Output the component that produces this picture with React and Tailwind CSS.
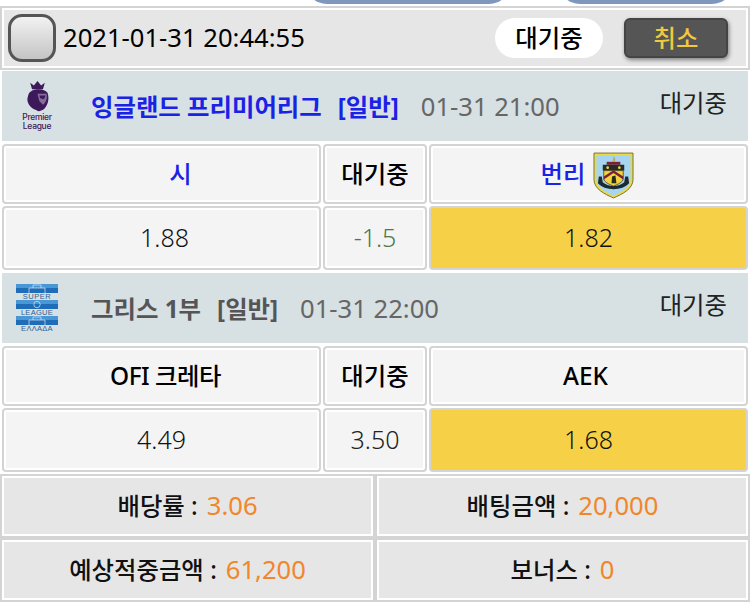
const FONT = "font-['Noto_Sans','Noto_Sans_CJK_KR',sans-serif]"

const PremierLogo = () => (
  <div className="flex flex-col items-center w-[34px] -mt-[1px]">
    <svg viewBox="0 0 26 34" className="w-[25px] h-[31px]">
      <path d="M7 9 L5 2 L9 5 L13 0 L17 5 L21 2 L19 9 Z" fill="#3d195b" />
      <path d="M3 15 C5 8 20 7 24 13 C26 19 25 25 21 30 C18 33 14 34 12 32 C7 31 1 25 2 19 Z" fill="#3d195b" />
      <path d="M13 14 L23 14 C24 19 22 24 19 26 L15 22 Z" fill="#f2eef5" opacity="0.4" />
      <path d="M15 16 L22 16 L20 20 L16 19 Z" fill="#3d195b" />
    </svg>
    <div className="mt-[1px] text-center text-[#3d195b] text-[8.5px] leading-[9px] font-medium font-['Inter',sans-serif] tracking-[-0.3px]">
      <div>Premier</div>
      <div>League</div>
    </div>
  </div>
)

const BlueStrip = ({ shape }) => (
  <svg viewBox="0 0 42 9" className="w-[42px] h-[9px] block">
    <rect width="42" height="9" fill="#1f6cb8" />
    <rect width="42" height="4" fill="#4a97d6" />
    {shape === 'circle' ? (
      <circle cx="21" cy="4.5" r="3.2" fill="none" stroke="#d5e6f4" strokeWidth="0.7" />
    ) : (
      <path d="M13 9 V4 H29 V9 M17 4 V1 H25 V4" fill="none" stroke="#d5e6f4" strokeWidth="0.7" />
    )}
  </svg>
)

const SuperLeagueLogo = () => (
  <div className="flex flex-col w-[42px] text-[#2c5f96] text-[7.5px] leading-[7px] text-center font-['Liberation_Sans',sans-serif]">
    <BlueStrip />
    <div className="h-[7px] tracking-[0.5px]">SUPER</div>
    <BlueStrip shape="circle" />
    <div className="h-[7px] tracking-[0.3px]">LEAGUE</div>
    <BlueStrip />
    <div className="h-[7px] tracking-[0.3px]">ΕΛΛΑΔΑ</div>
  </div>
)

const BurnleyCrest = () => (
  <svg viewBox="0 0 42 48" className="w-[41px] h-[47px] shrink-0 mt-[2px] mr-[2px]">
    <path d="M1 1 H41 V28 C41 38 30 43 21 47 C12 43 1 38 1 28 Z" fill="#e9d84c" stroke="#77733a" strokeWidth="1" />
    <path d="M3.5 3.5 H38.5 V28 C38.5 36 29 41 21 44.5 C13 41 3.5 36 3.5 28 Z" fill="#a5d5f0" />
    <path d="M20 10 L21 4 L23 7 L22.5 10 Z" fill="#c9a94a" />
    <rect x="14" y="10" width="14" height="3" fill="#7a1f38" />
    <rect x="10" y="13" width="22" height="6" fill="#2a2a22" />
    <circle cx="15" cy="16" r="1.4" fill="#f2d338" />
    <circle cx="27" cy="16" r="1.4" fill="#f2d338" />
    <path d="M11 19 H31 V27 C31 31 25 33 21 35 C17 33 11 31 11 27 Z" fill="#f2d338" stroke="#2a2a22" strokeWidth="0.7" />
    <path d="M11 25 L21 18.5 L31 25 L31 28 L21 21.5 L11 28 Z" fill="#7a1f38" />
    <path d="M19.5 25 L23 24 L24 32 L19 32 Z" fill="#2a2a22" />
    <path d="M6 25 L9 25 L10 31 C15 36 27 36 32 31 L33 25 L36 25 L37 32 C30 40 12 40 5 32 Z" fill="#1f2a30" />
  </svg>
)

const LeagueRow = ({ logo, name, tag, time, color }) => (
  <div className="h-[70px] mx-[2px] bg-[#d7e0e3] flex relative">
    <div className="w-[70px] flex items-center justify-center shrink-0">{logo}</div>
    <div className="flex-1 flex items-center pl-[19px] pt-[2px]">
      <span className={`text-[24.4px] font-bold ${color}`}>{name}</span>
      <span className={`text-[24.4px] font-bold ${color} ml-[16px]`}>{tag}</span>
      <span className="text-[25.6px] text-[#666] ml-[22px]">{time}</span>
    </div>
    <span className="absolute right-[21px] top-[14px] text-[24.4px] text-[#222]">대기중</span>
  </div>
)

const Cell = ({ children, className = '' }) => (
  <div className={`flex items-center justify-center rounded-[4px] border-[2px] border-[#d4d4d4] ${className}`}>
    {children}
  </div>
)

const MatchRows = ({ home, away, handicap, homeOdds, line, awayOdds, teamColor, lineColor, crest, homeClass, awayClass, oddsClass }) => (
  <div className="mx-[2px] mt-[3px] mb-[3px] flex flex-col gap-[2px]">
    <div className="grid grid-cols-[319px_104px_319px] gap-[2px] h-[60px]">
      <Cell className="bg-[#f4f4f4] shadow-[inset_0_0_0_2px_#fff]">
        <span className={`text-[24.4px] font-medium ${teamColor} ${homeClass}`}>{home}</span>
      </Cell>
      <Cell className="bg-[#f4f4f4] shadow-[inset_0_0_0_2px_#fff]">
        <span className="text-[24.4px] font-medium text-black">{handicap}</span>
      </Cell>
      <Cell className="bg-[#f4f4f4] shadow-[inset_0_0_0_2px_#fff] gap-[8px]">
        <span className={`text-[24.4px] font-medium ${teamColor} ${awayClass}`}>{away}</span>
        {crest}
      </Cell>
    </div>
    <div className="grid grid-cols-[319px_104px_319px] gap-[2px] h-[64px]">
      <Cell className="bg-[#f4f4f4] shadow-[inset_0_0_0_2px_#fff]">
        <span className={`text-[25px] font-light text-[#111] ${oddsClass}`}>{homeOdds}</span>
      </Cell>
      <Cell className="bg-[#f4f4f4] shadow-[inset_0_0_0_2px_#fff]">
        <span className={`text-[25px] font-light ${lineColor}`}>{line}</span>
      </Cell>
      <Cell className="bg-[#f6d147]">
        <span className="text-[25px] font-light text-[#111]">{awayOdds}</span>
      </Cell>
    </div>
  </div>
)

const Stat = ({ label, value }) => (
  <div className="h-[60px] bg-[#e6e6e6] border-[2px] border-white outline-[2px] outline-[#d4d4d4] flex items-center justify-center gap-[9px]">
    <span className="text-[24.4px] font-medium text-[#111]">{label} :</span>
    <span className="text-[25.6px] text-[#f0872b]">{value}</span>
  </div>
)

export default function App() {
  return (
    <div className={`w-[750px] h-[607px] bg-white overflow-hidden relative ${FONT}`}>
      {/* tabs clipped by the top of the window */}
      <div className="absolute left-[305px] top-[-20px] w-[206px] h-[24px] rounded-b-[22px] bg-[#7f97bd]" />
      <div className="absolute left-[558px] top-[-20px] w-[176px] h-[24px] rounded-b-[22px] bg-[#7f97bd]" />

      <div className="h-[6px]" />
      <div className="h-[64px] border-[2px] border-[#d4d4d4] bg-white p-[2px]">
        <div className="h-full bg-[#e6e6e6] flex items-center pl-[4px] pr-[18px]">
          <div className="w-[48px] h-[48px] rounded-[14px] border-[3px] border-[#555] bg-linear-to-b from-[#f2f2f2] to-[#c4c4c4]" />
          <span className="ml-[7px] text-[25.6px] text-black">2021-01-31 20:44:55</span>
          <span className="ml-auto w-[108px] h-[40px] rounded-full bg-white flex items-center justify-center text-[24.4px] font-medium text-black">
            대기중
          </span>
          <button className="ml-[21px] w-[104px] h-[40px] rounded-[6px] bg-[#555] border-[2px] border-[#444] shadow-[1px_2px_4px_rgba(0,0,0,0.45)] flex items-center justify-center text-[24.4px] font-medium text-[#f0c93e]">
            취소
          </button>
        </div>
      </div>

      <div className="h-[1px]" />
      <LeagueRow
        logo={<PremierLogo />}
        name="잉글랜드 프리미어리그"
        tag="[일반]"
        time="01-31 21:00"
        color="text-[#1a22e6]"
      />
      <MatchRows
        home="시"
        away="번리"
        handicap="대기중"
        homeOdds="1.88"
        line="-1.5"
        awayOdds="1.82"
        teamColor="text-[#1a22e6]"
        lineColor="text-[#4a7a4a]"
        crest={<BurnleyCrest />}
        homeClass="ml-[38px]"
        awayClass=""
        oddsClass="ml-[6px]"
      />
      <LeagueRow
        logo={<SuperLeagueLogo />}
        name="그리스 1부"
        tag="[일반]"
        time="01-31 22:00"
        color="text-[#555]"
      />
      <MatchRows
        home="OFI 크레타"
        away="AEK"
        handicap="대기중"
        homeOdds="4.49"
        line="3.50"
        awayOdds="1.68"
        teamColor="text-black"
        lineColor="text-[#222]"
        homeClass="ml-[8px] tracking-[-0.5px]"
        awayClass="-ml-[6px]"
        oddsClass=""
      />

      <div className="mx-[2px] grid grid-cols-[371px_371px] gap-x-[4px] gap-y-[4px] pt-[1px]">
        <Stat label="배당률" value="3.06" />
        <Stat label="배팅금액" value="20,000" />
        <Stat label="예상적중금액" value="61,200" />
        <Stat label="보너스" value="0" />
      </div>
    </div>
  )
}
